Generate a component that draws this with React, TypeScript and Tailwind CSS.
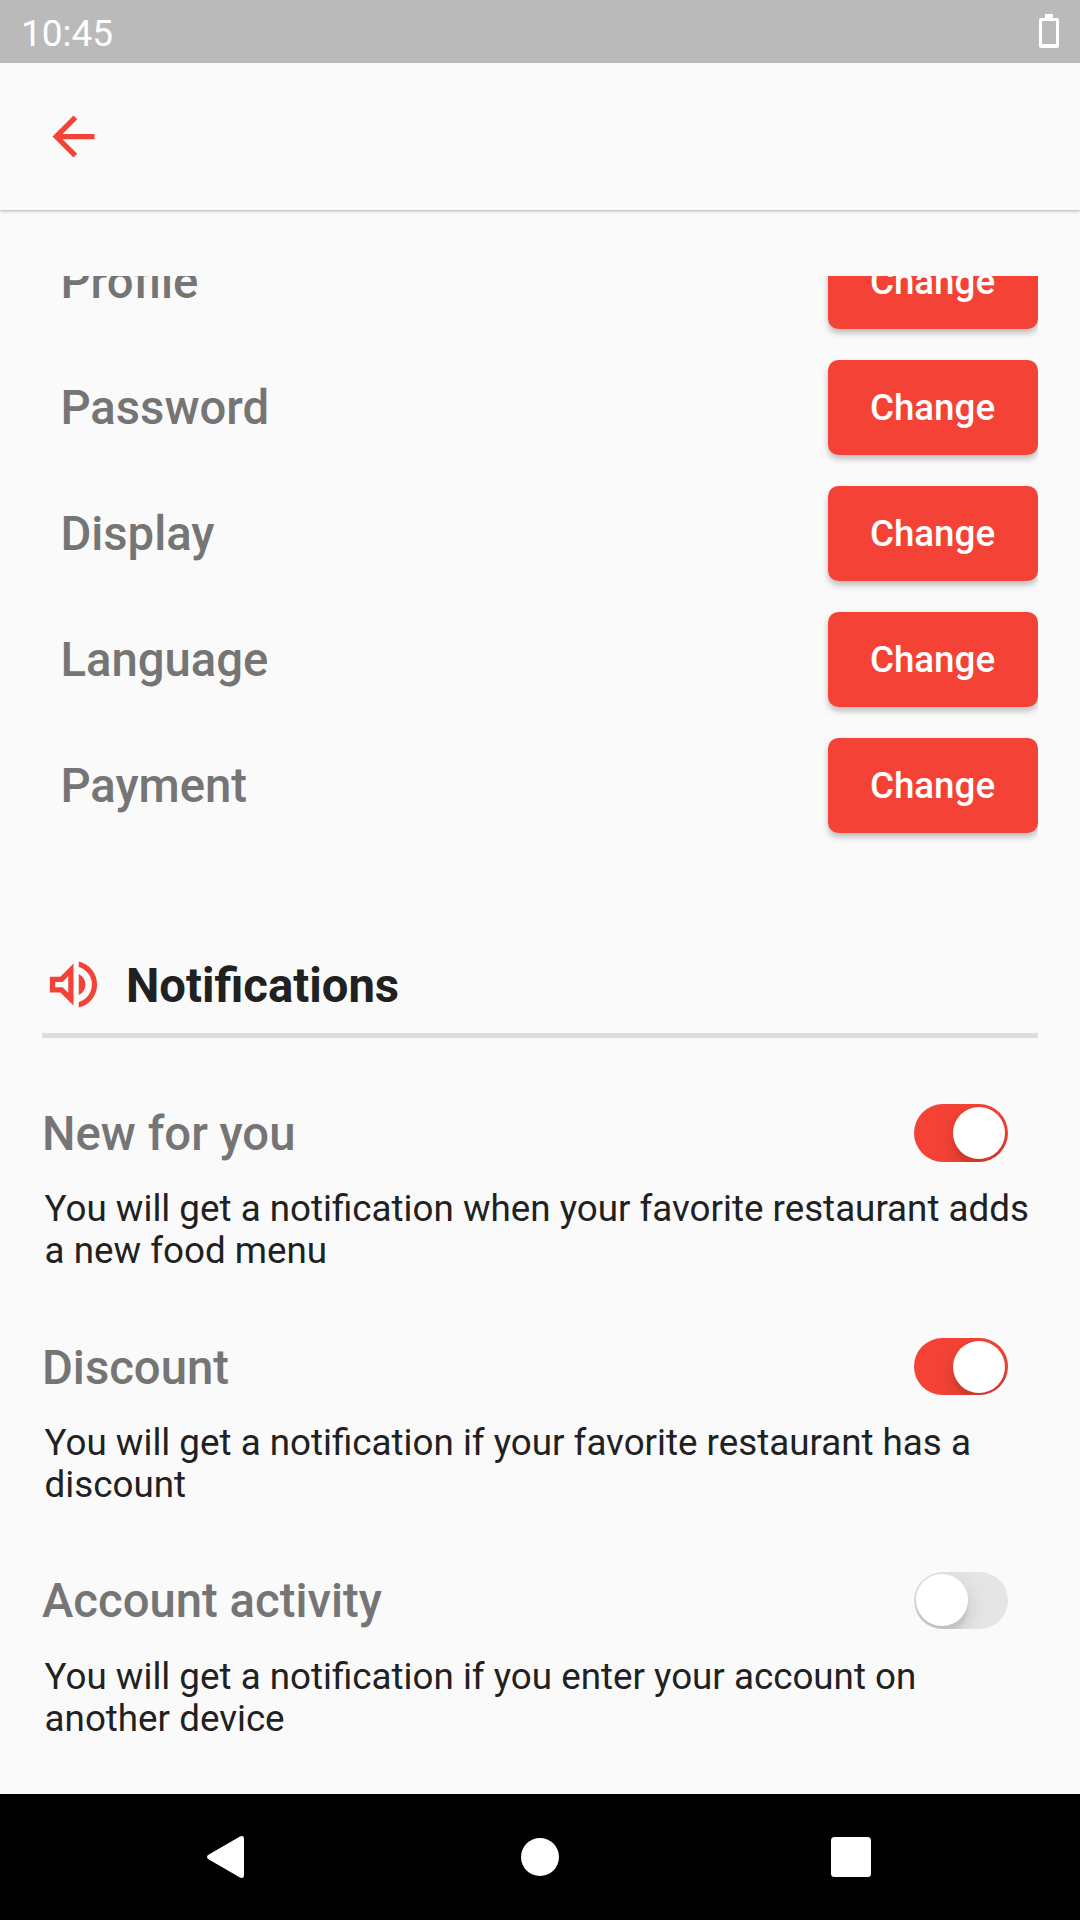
import React from "react";

const settings = ["Profile", "Password", "Display", "Language", "Payment"];
const notices = [
  { title: "New for you", lines: ["You will get a notification when your favorite restaurant adds", "a new food menu"], on: true },
  { title: "Discount", lines: ["You will get a notification if your favorite restaurant has a", "discount"], on: true },
  { title: "Account activity", lines: ["You will get a notification if you enter your account on", "another device"], on: false },
];

function Toggle({ on }: { on: boolean }) {
  return (
    <div className={`mb-[1px] flex h-[57.5px] w-[94px] items-center overflow-hidden rounded-full p-[2.6px] ${on ? "justify-end bg-[#f44336]" : "justify-start bg-[#e5e5e5]"}`}>
      <div className="size-[52px] shrink-0 rounded-full bg-white shadow-[0_8px_21px_rgba(0,0,0,0.15),0_8px_3px_rgba(0,0,0,0.06)]" />
    </div>
  );
}

export default function App() {
  return (
    <div className="flex h-[1920px] w-[1080px] flex-col overflow-hidden bg-[#fafafa] font-['Roboto',sans-serif]">
      <div className="relative z-10 flex h-[63px] shrink-0 items-center justify-between bg-[#bababa] px-[21px] text-white">
        <span className="pt-[4px] text-[37px]">10:45</span>
        <svg className="mb-[1px]" width="20" height="34" viewBox="0 0 20 34" fill="currentColor" fillRule="evenodd">
          <path d="M6 0h8v4h4q2 0 2 2v26q0 2-2 2H2q-2 0-2-2V6q0-2 2-2h4zM3 7v23h14V7z" />
        </svg>
      </div>
      <header className="flex h-[147px] shrink-0 items-center pl-[42px] shadow-[0_1px_3px_rgba(0,0,0,0.3)]">
        <svg className="size-[63px] text-[#f44336]" viewBox="0 0 24 24" fill="currentColor">
          <path d="M20 11H7.83l5.59-5.59L12 4l-8 8 8 8 1.41-1.41L7.83 13H20v-2z" />
        </svg>
      </header>
      <main className="mx-[42px] mt-[66px] flex h-[1518px] shrink-0 flex-col overflow-hidden">
        <div className="-mt-[42px] shrink-0">
          {settings.map((s) => (
            <div key={s} className="mb-[31.5px] flex h-[94.5px] items-center justify-between pl-[18.4px]">
              <span className="pt-[2px] text-[47.25px] font-medium text-[#757575]">{s}</span>
              <button className="h-[94.5px] w-[210px] rounded-[10.5px] bg-[#f44336] pt-[1px] pr-[1px] text-[36.75px] font-medium text-white shadow-[0_4px_6px_rgba(0,0,0,0.25)]">Change</button>
            </div>
          ))}
        </div>
        <div className="mt-[84px] flex h-[85px] shrink-0 items-start">
          <svg className="mt-[5px] size-[63px] text-[#f44336]" viewBox="0 0 24 24" fill="currentColor">
            <path d="M3 9v6h4l5 5V4L7 9H3zm7-.17v6.34L7.83 13H5v-2h2.83L10 8.83zM16.5 12A4.5 4.5 0 0014 7.97v8.05A4.5 4.5 0 0016.5 12zM14 3.23v2.06a7 7 0 010 13.42v2.06a9 9 0 000-17.54z" />
          </svg>
          <h2 className="ml-[21px] pt-[2px] text-[47.25px] leading-[72px] font-bold text-[#212121]">Notifications</h2>
        </div>
        <div className="h-[5.25px] shrink-0 bg-[#dcdcdc]" />
        <div className="mt-[32px]">
          {notices.map((n) => (
            <section key={n.title} className="h-[233.75px]">
              <div className="flex h-[126px] items-center justify-between pr-[30.5px]">
                <h3 className="pt-[2px] text-[47.25px] font-medium text-[#757575]">{n.title}</h3>
                <Toggle on={n.on} />
              </div>
              <div className="-mt-[8px] ml-[2.6px] text-[36.75px] leading-[42px] whitespace-nowrap text-[#212121]">
                {n.lines.map((line) => <p key={line}>{line}</p>)}
              </div>
            </section>
          ))}
        </div>
      </main>
      <nav className="flex h-[126px] shrink-0 items-center bg-black pl-[207px] text-white">
        <svg width="37" height="42" viewBox="0 0 37 42" fill="currentColor"><path d="M1 19L33 .5Q37-1 37 3v36q0 4-4 2.5L1 23q-2-2 0-4z" /></svg>
        <div className="ml-[276.5px] size-[38.5px] rounded-full bg-white" />
        <div className="ml-[272px] size-[40px] rounded-[3.5px] bg-white" />
      </nav>
    </div>
  );
}
